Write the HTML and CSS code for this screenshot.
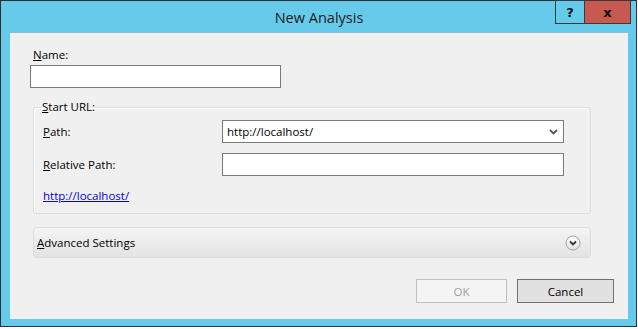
FILE: index.html
```html
<!DOCTYPE html>
<html lang="en">

<head>
    <meta charset="UTF-8">
    <meta name="viewport" content="width=device-width, initial-scale=1.0">
    <title>New Analysis</title>
    <link rel="stylesheet" href="styles.css">
</head>

<body>
    <div class="window">
        <div class="titlebar">
            <span class="title">New Analysis</span>
            <div class="controls">
                <span class="btn-help">?</span>
                <span class="btn-close">x</span>
            </div>
        </div>
        <div class="client">
            <label class="lbl name-lbl"><u>N</u>ame:</label>
            <input class="txt name-txt" type="text">

            <fieldset class="group">
                <legend><u>S</u>tart URL:</legend>
                <div class="row">
                    <label class="lbl"><u>P</u>ath:</label>
                    <div class="combo">
                        <span>http://localhost/</span>
                        <svg width="9" height="6" viewBox="0 0 9 6"><path d="M1 1 L4.5 4.5 L8 1" fill="none" stroke="#555" stroke-width="1.8"/></svg>
                    </div>
                </div>
                <div class="row">
                    <label class="lbl"><u>R</u>elative Path:</label>
                    <input class="txt rel-txt" type="text">
                </div>
                <a class="link" href="#">http://localhost/</a>
            </fieldset>

            <div class="expander">
                <span><u>A</u>dvanced Settings</span>
                <svg width="16" height="16" viewBox="0 0 16 16">
                    <defs>
                        <linearGradient id="g" x1="0" y1="0" x2="0" y2="1">
                            <stop offset="0" stop-color="#ffffff"/>
                            <stop offset="1" stop-color="#e2e2e2"/>
                        </linearGradient>
                    </defs>
                    <circle cx="8" cy="8" r="7" fill="url(#g)" stroke="#a0a0a0"/>
                    <path d="M5 6.5 L8 9.5 L11 6.5" fill="none" stroke="#333" stroke-width="1.8"/>
                </svg>
            </div>

            <div class="buttons">
                <span class="btn btn-ok">OK</span>
                <span class="btn btn-cancel">Cancel</span>
            </div>
        </div>
    </div>
</body>

</html>
```

FILE: styles.css
```css
* {
    margin: 0;
    padding: 0;
    box-sizing: border-box;
}

body {
    background: #fff;
    font-family: "Open Sans", "Noto Sans", sans-serif;
    font-size: 11.5px;
    color: #000;
}

.window {
    position: relative;
    width: 637px;
    height: 327px;
    border: 1px solid #2f2f2f;
    background-color: #66cbea;
    padding: 0 8px 7px 9px;
    display: flex;
    flex-direction: column;
}

.titlebar {
    height: 31px;
    display: flex;
    justify-content: center;
    align-items: center;
}

.title {
    font-size: 14.5px;
    color: #1b1b1b;
    padding-top: 2px;
}

.controls {
    position: absolute;
    top: -1px;
    right: 5px;
    display: flex;
}

.controls span {
    height: 24px;
    border: 1px solid #3a3a3a;
    font-family: "DejaVu Sans", sans-serif;
    font-weight: bold;
    font-size: 13px;
    display: flex;
    justify-content: center;
    align-items: center;
    color: #111;
}

.btn-help {
    width: 29px;
    border-right: none !important;
}

.btn-close {
    width: 47px;
    background-color: #c75a50;
}

.client {
    flex: 1;
    background-color: #f0f0f0;
    border-top: 1px solid #9ab8c6;
    padding: 14px 14px 0 20px;
    display: flex;
    flex-direction: column;
}

.lbl {
    line-height: 16px;
}

.name-lbl {
    margin-left: 3px;
}

.txt {
    height: 23px;
    border: 1px solid #7a7a7a;
    background: #fff;
    outline: none;
}

.name-txt {
    width: 251px;
    margin-top: 2px;
}

.group {
    margin: 11px 0 0 3px;
    width: 558px;
    height: 115px;
    border: 1px solid #d5dfe5;
    border-radius: 3px;
    box-shadow: inset 1px 1px 0 #fff;
    padding: 5px 26px 0 9px;
}

.group legend {
    margin-left: -2px;
    padding: 0 1px;
    line-height: 16px;
}

.row {
    display: flex;
    align-items: center;
    justify-content: space-between;
    margin-bottom: 10px;
}

.combo {
    width: 342px;
    height: 23px;
    border: 1px solid #7a7a7a;
    background: #fff;
    display: flex;
    align-items: center;
    justify-content: space-between;
    padding: 0 5px 0 4px;
}

.rel-txt {
    width: 342px;
}

.link {
    display: inline-block;
    margin-top: 2px;
    color: #0000ee;
    align-self: flex-start;
}

.expander {
    margin: 13px 0 0 3px;
    width: 558px;
    height: 31px;
    border: 1px solid #d5dfe5;
    border-radius: 3px;
    background: linear-gradient(#f4f4f4, #e3e3e3);
    display: flex;
    align-items: center;
    justify-content: space-between;
    padding: 0 9px 0 3px;
}

.expander svg {
    display: block;
}

.buttons {
    margin-top: 21px;
    display: flex;
    justify-content: flex-end;
    gap: 10px;
}

.btn {
    height: 24px;
    display: flex;
    justify-content: center;
    align-items: center;
}

.btn-ok {
    width: 91px;
    border: 1px solid #bfbfbf;
    background-color: #f4f4f4;
    color: #a0a0a0;
}

.btn-cancel {
    width: 97px;
    border: 1px solid #707070;
    background-color: #e1e1e1;
}
```
